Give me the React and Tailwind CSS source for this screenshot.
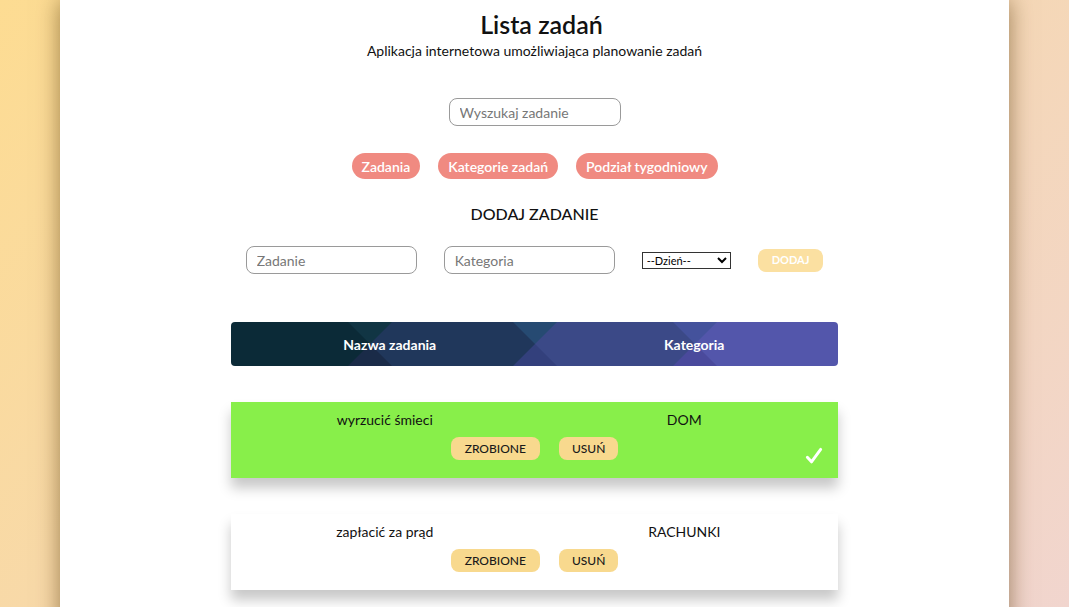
import React from 'react'

const tasks = [
  { name: 'wyrzucić śmieci', category: 'DOM', done: true },
  { name: 'zapłacić za prąd', category: 'RACHUNKI', done: false },
]

function HeaderPattern() {
  // diagonal "X" band pattern behind the table header
  const h = 44
  const bands = ['#0b2a37', '#20375b', '#3b4987', '#5356ab']
  const cuts = [
    { x: 139, top: '#113544', bottom: '#1a2b48' },
    { x: 304, top: '#264a72', bottom: '#33407c' },
    { x: 464, top: '#44529c', bottom: '#4a4a9c' },
  ]
  const edges = [0, ...cuts.map((c) => c.x), 607]
  return (
    <svg className="absolute inset-0 w-full h-full" viewBox="0 0 607 44" preserveAspectRatio="none">
      {bands.map((c, i) => (
        <rect key={i} x={edges[i]} y="0" width={edges[i + 1] - edges[i] + 1} height={h} fill={c} />
      ))}
      {cuts.map((c, i) => (
        <g key={i}>
          <polygon points={`${c.x - 22},0 ${c.x + 22},0 ${c.x},22`} fill={c.top} />
          <polygon points={`${c.x - 22},44 ${c.x + 22},44 ${c.x},22`} fill={c.bottom} />
        </g>
      ))}
    </svg>
  )
}

function TaskCard({ task }) {
  return (
    <div
      className={`relative pt-[8px] pb-[18px] shadow-[0_10px_12px_rgba(0,0,0,0.22)] ${
        task.done ? 'bg-[#88ef4a]' : 'bg-white'
      }`}
    >
      <div className="grid grid-cols-2 text-[14px] leading-[20px] text-[#111]">
        <div className="text-center pl-[4px]">{task.name}</div>
        <div className="text-center pr-[4px]">{task.category}</div>
      </div>
      <div className="flex justify-center gap-[19px] mt-[7px]">
        <button className="h-[23px] px-[14px] rounded-[8px] bg-[#f8d98e] text-[12px] font-medium text-[#1a1a1a]">
          ZROBIONE
        </button>
        <button className="h-[23px] px-[13px] rounded-[8px] bg-[#f8d98e] text-[12px] font-medium text-[#1a1a1a]">
          USUŃ
        </button>
      </div>
      {task.done && (
        <svg
          className="absolute right-[14px] top-[44px] w-[20px] h-[20px] text-white"
          viewBox="0 0 24 24"
          fill="none"
          stroke="currentColor"
          strokeWidth={3.5}
          strokeLinecap="round"
          strokeLinejoin="round"
        >
          <path d="M4 13.5l5 5.5L20 4" />
        </svg>
      )}
    </div>
  )
}

export default function App() {
  return (
    <div
      className="min-h-[607px] bg-[linear-gradient(135deg,#fddc92_0%,#f6d8b0_50%,#f1d5cf_100%)]"
      style={{ fontFamily: 'Lato, "Open Sans", sans-serif' }}
    >
      <div className="w-[949px] mx-auto bg-white min-h-[607px] shadow-[0_0_22px_rgba(80,50,0,0.55)] pt-[8px] pb-[40px]">
        <h1 className="text-center text-[25px] leading-[32px] font-semibold text-[#111] pl-[14px]">Lista zadań</h1>
        <p className="text-center text-[14px] leading-[20px] mt-[1px] text-[#111]">
          Aplikacja internetowa umożliwiająca planowanie zadań
        </p>

        <div className="flex justify-center mt-[37px]">
          <input
            className="w-[172px] h-[28px] rounded-[8px] border border-[#9a9a9a] px-[10px] text-[14px] outline-none placeholder:text-[#777]"
            placeholder="Wyszukaj zadanie"
          />
        </div>

        <div className="flex justify-center gap-[18px] mt-[27px]">
          {['Zadania', 'Kategorie zadań', 'Podział tygodniowy'].map((label) => (
            <button
              key={label}
              className="h-[26px] px-[10px] rounded-full bg-[#f08a81] text-white text-[14px] font-semibold"
            >
              {label}
            </button>
          ))}
        </div>

        <h2 className="text-center text-[16px] leading-[24px] font-medium mt-[23px] text-[#111]">DODAJ ZADANIE</h2>

        <div className="flex justify-center items-center gap-[27px] mt-[20px]">
          <input
            className="w-[171px] h-[28px] rounded-[8px] border border-[#9a9a9a] px-[10px] text-[14px] outline-none placeholder:text-[#777]"
            placeholder="Zadanie"
          />
          <input
            className="w-[171px] h-[28px] rounded-[8px] border border-[#9a9a9a] px-[10px] text-[14px] outline-none placeholder:text-[#777]"
            placeholder="Kategoria"
          />
          <select className="w-[89px] h-[17px] border border-[#333] text-[11px] leading-[14px] bg-white text-black">
            <option>--Dzień--</option>
          </select>
          <button className="h-[23px] px-[14px] rounded-[8px] bg-[#fbe0a1] text-white text-[11px] font-bold">
            DODAJ
          </button>
        </div>

        <div className="w-[607px] mx-auto mt-[48px]">
          <div className="relative h-[44px] rounded-[4px] overflow-hidden">
            <HeaderPattern />
            <div className="relative grid grid-cols-2 h-full items-center text-white text-[14px] font-bold">
              <div className="text-center pl-[14px]">Nazwa zadania</div>
              <div className="text-center pl-[16px]">Kategoria</div>
            </div>
          </div>

          <div className="flex flex-col gap-[36px] mt-[36px]">
            {tasks.map((t) => (
              <TaskCard key={t.name} task={t} />
            ))}
          </div>
        </div>
      </div>
    </div>
  )
}
